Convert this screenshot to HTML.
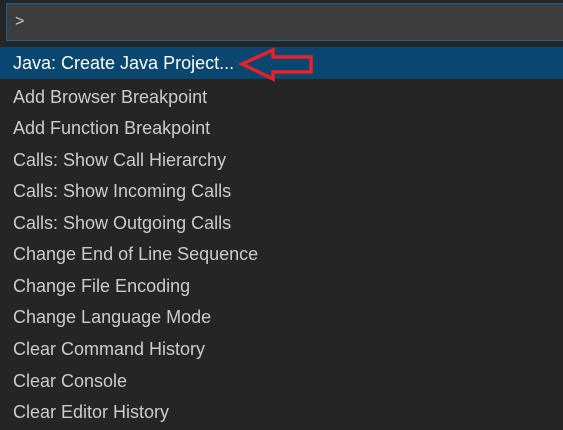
<!DOCTYPE html>
<html><head><style>
body{margin:0;width:563px;height:430px;background:#252526;overflow:hidden;font-family:"Liberation Sans",sans-serif;}
.inp{position:absolute;left:6px;top:3px;width:570px;height:36px;background:#3c3c3c;border:1px solid #0e639c;color:#ccc;font-size:16px;}
.inp span{position:absolute;left:8px;top:9px;}
.row{position:absolute;left:0;width:563px;height:32px;color:#ccc;font-size:18px;line-height:32px;}
.row span{margin-left:13px;}
.sel{background:#094771;color:#fff;}
</style></head><body>
<div class="inp"><span>&gt;</span></div>
<div class="row sel" style="top:47px"><span>Java: Create Java Project...</span></div>
<svg style="position:absolute;left:0;top:0" width="563" height="430"><polygon points="242,64 273,50 273,57 311,57 311,72 273,72 273,79" fill="none" stroke="#e8202a" stroke-width="3.5" stroke-linejoin="miter"/></svg>
<div class="row" style="top:81px"><span>Add Browser Breakpoint</span></div>
<div class="row" style="top:112px"><span>Add Function Breakpoint</span></div>
<div class="row" style="top:144px"><span>Calls: Show Call Hierarchy</span></div>
<div class="row" style="top:175px"><span>Calls: Show Incoming Calls</span></div>
<div class="row" style="top:207px"><span>Calls: Show Outgoing Calls</span></div>
<div class="row" style="top:238px"><span>Change End of Line Sequence</span></div>
<div class="row" style="top:270px"><span>Change File Encoding</span></div>
<div class="row" style="top:301px"><span>Change Language Mode</span></div>
<div class="row" style="top:333px"><span>Clear Command History</span></div>
<div class="row" style="top:365px"><span>Clear Console</span></div>
<div class="row" style="top:396px"><span>Clear Editor History</span></div>
</body></html>
